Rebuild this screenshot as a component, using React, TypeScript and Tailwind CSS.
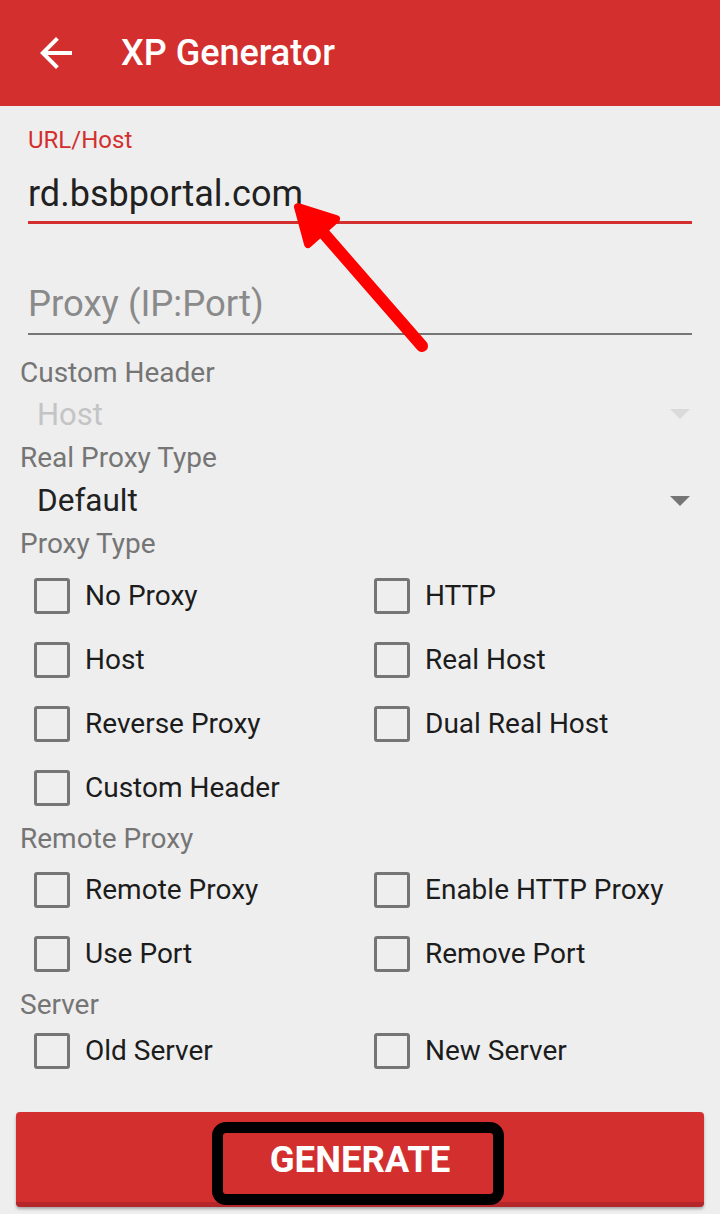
import React from "react"

const Box = ({ label }: { label: string }) => (
  <div className="flex h-[64px] items-center">
    <div className="ml-[14px] h-[36px] w-[36px] shrink-0 rounded-[3px] border-[3px] border-[#757575]" />
    <span className="ml-[15px] text-[28px] leading-none text-[#1c1c1c]">{label}</span>
  </div>
)

const SectionLabel = ({ children, className = "" }: { children: React.ReactNode; className?: string }) => (
  <div className={`h-[30px] text-[28px] leading-[30px] text-[#757575] ${className}`}>{children}</div>
)

const Caret = ({ color }: { color: string }) => (
  <svg width="20" height="10" viewBox="0 0 20 10">
    <path d="M0 0 L20 0 L10 10 Z" fill={color} />
  </svg>
)

export default function App() {
  return (
    <div className="relative h-[1214px] w-[720px] overflow-hidden bg-[#eeeeee] font-['Roboto',sans-serif]">
      <header className="flex h-[106px] items-center bg-[#d32f2f] pl-[32px]">
        <svg width="48" height="48" viewBox="0 0 24 24" fill="#ffffff">
          <path d="M20 11H7.83l5.59-5.59L12 4l-8 8 8 8 1.41-1.41L7.83 13H20v-2z" />
        </svg>
        <h1 className="ml-[41px] text-[36px] font-medium leading-none text-white">XP Generator</h1>
      </header>

      <div className="px-[28px]">
        <div className="mt-[20px] h-[28px] text-[24px] leading-[28px] text-[#d32f2f]">URL/Host</div>
        <div className="mt-[18px] h-[44px] text-[36px] leading-[44px] text-[#212121]">rd.bsbportal.com</div>
        <div className="mt-[5px] h-[3px] bg-[#d32f2f]" />
        <div className="mt-[58px] h-[44px] text-[36.5px] leading-[44px] text-[#8a8a8a]">Proxy (IP:Port)</div>
        <div className="mt-[7px] h-[2px] bg-[#757575]" />
      </div>

      <div className="px-[20px]">
        <SectionLabel className="mt-[23px]">Custom Header</SectionLabel>
        <div className="mt-[8px] flex h-[36px] items-center justify-between pl-[17px] pr-[10px]">
          <span className="text-[31px] leading-none text-[#c4c4c4]">Host</span>
          <Caret color="#dadada" />
        </div>
        <SectionLabel className="mt-[11px]">Real Proxy Type</SectionLabel>
        <div className="mt-[10px] flex h-[36px] items-center justify-between pl-[17px] pr-[10px]">
          <span className="text-[31.5px] leading-none text-[#212121]">Default</span>
          <Caret color="#757575" />
        </div>
        <SectionLabel className="mt-[10px]">Proxy Type</SectionLabel>
        <div className="mt-[5px] grid grid-cols-2">
          <Box label="No Proxy" />
          <Box label="HTTP" />
          <Box label="Host" />
          <Box label="Real Host" />
          <Box label="Reverse Proxy" />
          <Box label="Dual Real Host" />
          <Box label="Custom Header" />
        </div>
        <SectionLabel className="mt-[4px]">Remote Proxy</SectionLabel>
        <div className="mt-[4px] grid grid-cols-2">
          <Box label="Remote Proxy" />
          <Box label="Enable HTTP Proxy" />
          <Box label="Use Port" />
          <Box label="Remove Port" />
        </div>
        <SectionLabel className="mt-[4px]">Server</SectionLabel>
        <div className="-mt-[1px] grid grid-cols-2">
          <Box label="Old Server" />
          <Box label="New Server" />
        </div>
      </div>

      <div className="relative mx-[16px] mt-[29px] flex h-[95px] items-center justify-center rounded-[4px] border-b-[5px] border-[#b5262a] bg-[#d32f2f] pt-[6px] shadow-[0_2px_3px_rgba(0,0,0,0.3)]">
        <span className="text-[36.5px] font-bold leading-none text-white">GENERATE</span>
        <div className="absolute left-[196px] top-[10px] h-[83px] w-[292px] rounded-[14px] border-[11px] border-black" />
      </div>

      <svg className="pointer-events-none absolute left-0 top-0" width="720" height="1214">
        <line x1="422" y1="346" x2="313" y2="221" stroke="#ff0000" strokeWidth="12" strokeLinecap="round" />
        <path d="M298 207 L336 219 L308 244 Z" fill="#ff0000" stroke="#ff0000" strokeWidth="8" strokeLinejoin="round" />
      </svg>
    </div>
  )
}
